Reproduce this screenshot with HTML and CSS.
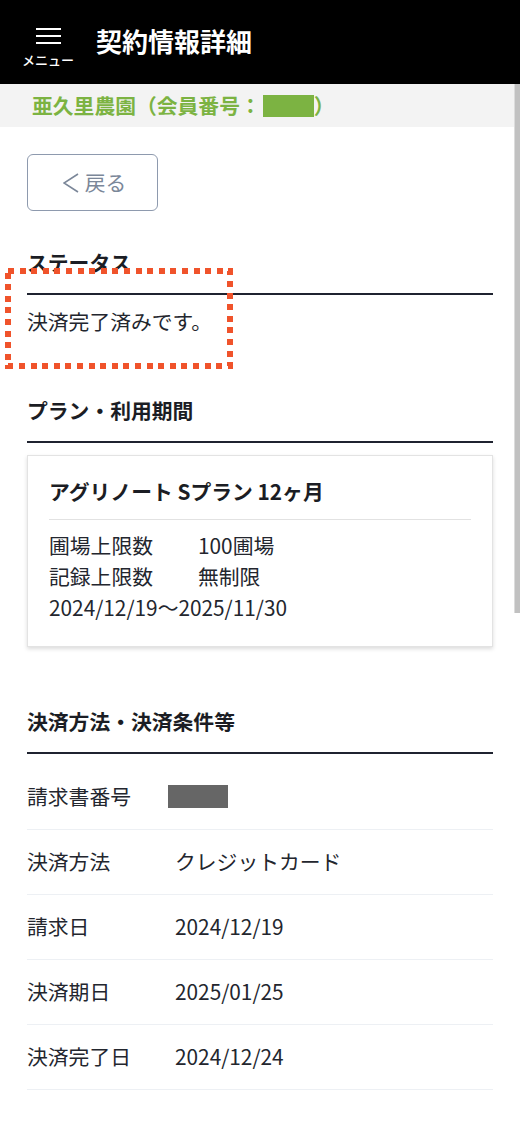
FILE: index.html
```html
<!DOCTYPE html>
<html lang="ja">
<head>
<meta charset="utf-8">
<title>契約情報詳細</title>
<link rel="stylesheet" href="styles.css">
</head>
<body>
<header class="appbar">
  <div class="menu">
    <svg class="menu-icon" width="25" height="16" viewBox="0 0 25 16">
      <rect x="0" y="0" width="25" height="2" fill="#fff"/>
      <rect x="0" y="7" width="25" height="2" fill="#fff"/>
      <rect x="0" y="14" width="25" height="2" fill="#fff"/>
    </svg>
    <span class="menu-label">メニュー</span>
  </div>
  <h1 class="title">契約情報詳細</h1>
</header>
<div class="subbar">亜久里農園（会員番号：<span class="mask-green"></span>）</div>
<main class="content">
  <button class="back">
    <svg class="chev" width="16" height="20" viewBox="0 0 16 20">
      <polyline points="15,1 1,10 15,19" fill="none" stroke="#7b8799" stroke-width="1.6"/>
    </svg>
    <span>戻る</span>
  </button>

  <section class="section status">
    <h2 class="sec-title">ステータス</h2>
    <p class="status-text">決済完了済みです。</p>
    <svg class="annot" width="228" height="101" viewBox="0 0 228 101">
      <rect x="3" y="3" width="222" height="95" fill="none" stroke="#f0532b" stroke-width="6" stroke-dasharray="6 5.6" shape-rendering="crispEdges"/>
    </svg>
  </section>

  <section class="section plan">
    <h2 class="sec-title">プラン・利用期間</h2>
    <div class="card">
      <div class="card-title">アグリノート Sプラン 12ヶ月</div>
      <dl class="card-grid">
        <dt>圃場上限数</dt><dd>100圃場</dd>
        <dt>記録上限数</dt><dd>無制限</dd>
        <dd class="span">2024/12/19～2025/11/30</dd>
      </dl>
    </div>
  </section>

  <section class="section pay">
    <h2 class="sec-title">決済方法・決済条件等</h2>
    <dl class="rows">
      <div class="row"><dt>請求書番号</dt><dd><span class="mask-gray"></span></dd></div>
      <div class="row"><dt>決済方法</dt><dd>クレジットカード</dd></div>
      <div class="row"><dt>請求日</dt><dd>2024/12/19</dd></div>
      <div class="row"><dt>決済期日</dt><dd>2025/01/25</dd></div>
      <div class="row"><dt>決済完了日</dt><dd>2024/12/24</dd></div>
    </dl>
  </section>
</main>
<div class="scroll-thumb"></div>
</body>
</html>
```

FILE: styles.css
```css
html, body {
  margin: 0;
  padding: 0;
  overflow: hidden;
}
body {
  font-family: "Noto Sans CJK JP", "Noto Sans", sans-serif;
  font-size: 20.8px;
  line-height: 31px;
  color: #23262e;
  background: #fff;
  height: 1125px;
}
.appbar {
  height: 84px;
  background: #000;
  display: flex;
  align-items: center;
}
.menu {
  width: 96px;
  align-self: flex-start;
  padding-top: 28px;
  display: flex;
  flex-direction: column;
  align-items: center;
}
.menu-icon {
  display: block;
}
.menu-label {
  color: #fff;
  font-size: 13px;
  line-height: 16px;
  margin-top: 8px;
  font-weight: 500;
}
.title {
  margin: 0;
  color: #fff;
  font-size: 26px;
  line-height: 32px;
  font-weight: 700;
  margin-top: -2px;
}
.subbar {
  height: 43px;
  background: #f3f3f3;
  padding-left: 32px;
  display: flex;
  align-items: center;
  color: #7cb342;
  font-weight: 700;
}
.mask-green {
  display: inline-block;
  width: 51px;
  height: 22px;
  background: #7cb342;
  margin-left: 2px;
}
.content {
  padding: 0 27px;
}
.back {
  margin-top: 27px;
  width: 131px;
  height: 57px;
  border: 1px solid #8e9aae;
  border-radius: 6px;
  background: #fff;
  color: #7b8799;
  font-family: inherit;
  font-size: 20.8px;
  line-height: 31px;
  padding: 0 0 0 4px;
  display: flex;
  align-items: center;
  justify-content: center;
}
.chev {
  display: block;
  margin-right: 6px;
}
.section {
  position: relative;
}
.sec-title {
  margin: 0;
  font-size: 20.8px;
  line-height: 31px;
  font-weight: 700;
  color: #1b1d24;
  padding-bottom: 15px;
  border-bottom: 2px solid #1f2330;
}
.status {
  margin-top: 36px;
}
.status-text {
  margin: 11px 0 0;
}
.annot {
  position: absolute;
  left: -22px;
  top: 21px;
  display: block;
}
.plan {
  margin-top: 58px;
}
.card {
  margin-top: 12px;
  border: 1px solid #e3e3e3;
  box-shadow: 0 2px 4px rgba(0, 0, 0, 0.14);
  padding: 20px 21px 23px;
}
.card-title {
  font-weight: 700;
  color: #1b1d24;
  padding-bottom: 12px;
  border-bottom: 1px solid #e2e2e2;
}
.card-grid {
  margin: 10px 0 0;
  display: grid;
  grid-template-columns: 149px auto;
}
.card-grid dt,
.card-grid dd {
  margin: 0;
}
.card-grid .span {
  grid-column: 1 / 3;
}
.pay {
  margin-top: 59px;
}
.rows {
  margin: 11px 0 0;
}
.row {
  display: flex;
  padding: 16px 0 17px;
  border-bottom: 1px solid #edf0f4;
}
.row dt {
  width: 148px;
  margin: 0;
}
.row dd {
  margin: 0;
  display: flex;
  align-items: center;
}
.mask-gray {
  display: inline-block;
  width: 60px;
  height: 23px;
  background: #666;
  margin-left: -7px;
}
.scroll-thumb {
  position: fixed;
  right: 0;
  top: 84px;
  width: 5px;
  height: 529px;
  background: #c1c1c1;
  border-left: 1px solid #dcdcdc;
}
```
